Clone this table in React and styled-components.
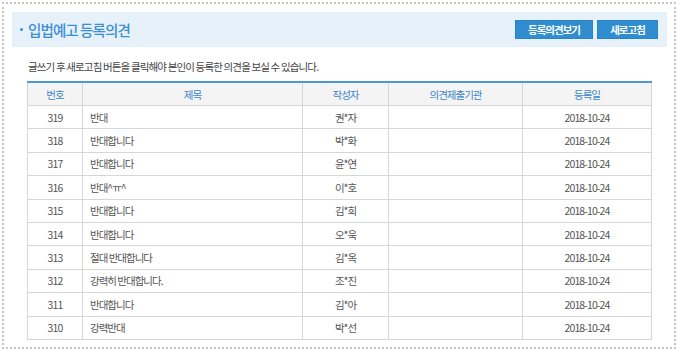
import styled, { createGlobalStyle } from "styled-components";

const GlobalStyle = createGlobalStyle`
    html, body {
        margin: 0;
        padding: 0;
        background: #fff;
    }
    body {
        padding: 2px;
        font-family: "Noto Sans CJK KR", "Liberation Sans", sans-serif;
        color: #555;
    }
`;

const Frame = styled.div`
    width: 674px;
    height: 347px;
    box-sizing: border-box;
    border: 2px dotted #c6c6c6;
    padding: 8px 7px 0 8px;
`;

const TitleBar = styled.div`
    height: 35px;
    background: #e7f1fa;
    display: flex;
    align-items: center;
    justify-content: space-between;
    padding: 0 9px 0 8px;
`;

const Title = styled.h2`
    margin: 0;
    font-size: 14.5px;
    font-weight: 500;
    color: #3b8fd6;
    letter-spacing: -0.9px;
    display: flex;
    align-items: center;
    gap: 5px;

    &::before {
        content: "";
        width: 3px;
        height: 3px;
        border-radius: 50%;
        background: #3b8fd6;
    }
`;

const Buttons = styled.div`
    display: flex;
    gap: 4px;
`;

const Button = styled.button`
    height: 19px;
    width: ${(p) => p.$w}px;
    padding: 0;
    border: 1px solid #2a83c6;
    background: #2f8dd0;
    color: #fff;
    font-family: inherit;
    font-size: 10.5px;
    font-weight: 700;
    letter-spacing: -1px;
    cursor: pointer;
`;

const Notice = styled.p`
    margin: 0;
    padding: 13px 0 0 16px;
    height: 21px;
    font-size: 10.5px;
    line-height: 14px;
    color: #444;
    letter-spacing: -0.85px;
`;

const Table = styled.table`
    margin-left: 15px;
    width: 625px;
    border-collapse: collapse;
    table-layout: fixed;
    border-top: 2px solid #4a9ad9;
    font-size: 10.5px;
`;

const Th = styled.th`
    height: 22px;
    padding: 0;
    background: #f4f4f4;
    border: 1px solid #d6d6d6;
    border-top: none;
    color: #3a87c8;
    font-weight: 400;
    letter-spacing: -1px;
`;

const Td = styled.td`
    height: 22.4px;
    padding: 0 ${(p) => (p.$left ? "7px" : "0")};
    border: 1px solid #d6d6d6;
    text-align: ${(p) => (p.$left ? "left" : "center")};
    color: #555;
    letter-spacing: ${(p) => (p.$num ? "-0.9px" : "-1px")};
    white-space: nowrap;
`;

const rows = [
    [319, "반대", "권*자"],
    [318, "반대합니다", "박*화"],
    [317, "반대합니다", "윤*연"],
    [316, "반대^ㅠ^", "이*호"],
    [315, "반대합니다", "김*희"],
    [314, "반대합니다", "오*욱"],
    [313, "절대 반대합니다", "김*옥"],
    [312, "강력히 반대합니다.", "조*진"],
    [311, "반대합니다", "김*아"],
    [310, "강력반대", "박*선"],
];

export default function App() {
    return (
        <>
            <GlobalStyle />
            <Frame>
                <TitleBar>
                    <Title>입법예고 등록의견</Title>
                    <Buttons>
                        <Button $w={78}>등록의견보기</Button>
                        <Button $w={61}>새로고침</Button>
                    </Buttons>
                </TitleBar>
                <Notice>
                    글쓰기 후 새로고침 버튼을 클릭해야 본인이 등록한 의견을 보실 수 있습니다.
                </Notice>
                <Table>
                    <colgroup>
                        <col style={{ width: 55 }} />
                        <col style={{ width: 220 }} />
                        <col style={{ width: 86 }} />
                        <col style={{ width: 134 }} />
                        <col />
                    </colgroup>
                    <thead>
                        <tr>
                            <Th>번호</Th>
                            <Th>제목</Th>
                            <Th>작성자</Th>
                            <Th>의견제출기관</Th>
                            <Th>등록일</Th>
                        </tr>
                    </thead>
                    <tbody>
                        {rows.map(([no, title, name]) => (
                            <tr key={no}>
                                <Td $num>{no}</Td>
                                <Td $left>{title}</Td>
                                <Td>{name}</Td>
                                <Td></Td>
                                <Td $num>2018-10-24</Td>
                            </tr>
                        ))}
                    </tbody>
                </Table>
            </Frame>
        </>
    );
}
